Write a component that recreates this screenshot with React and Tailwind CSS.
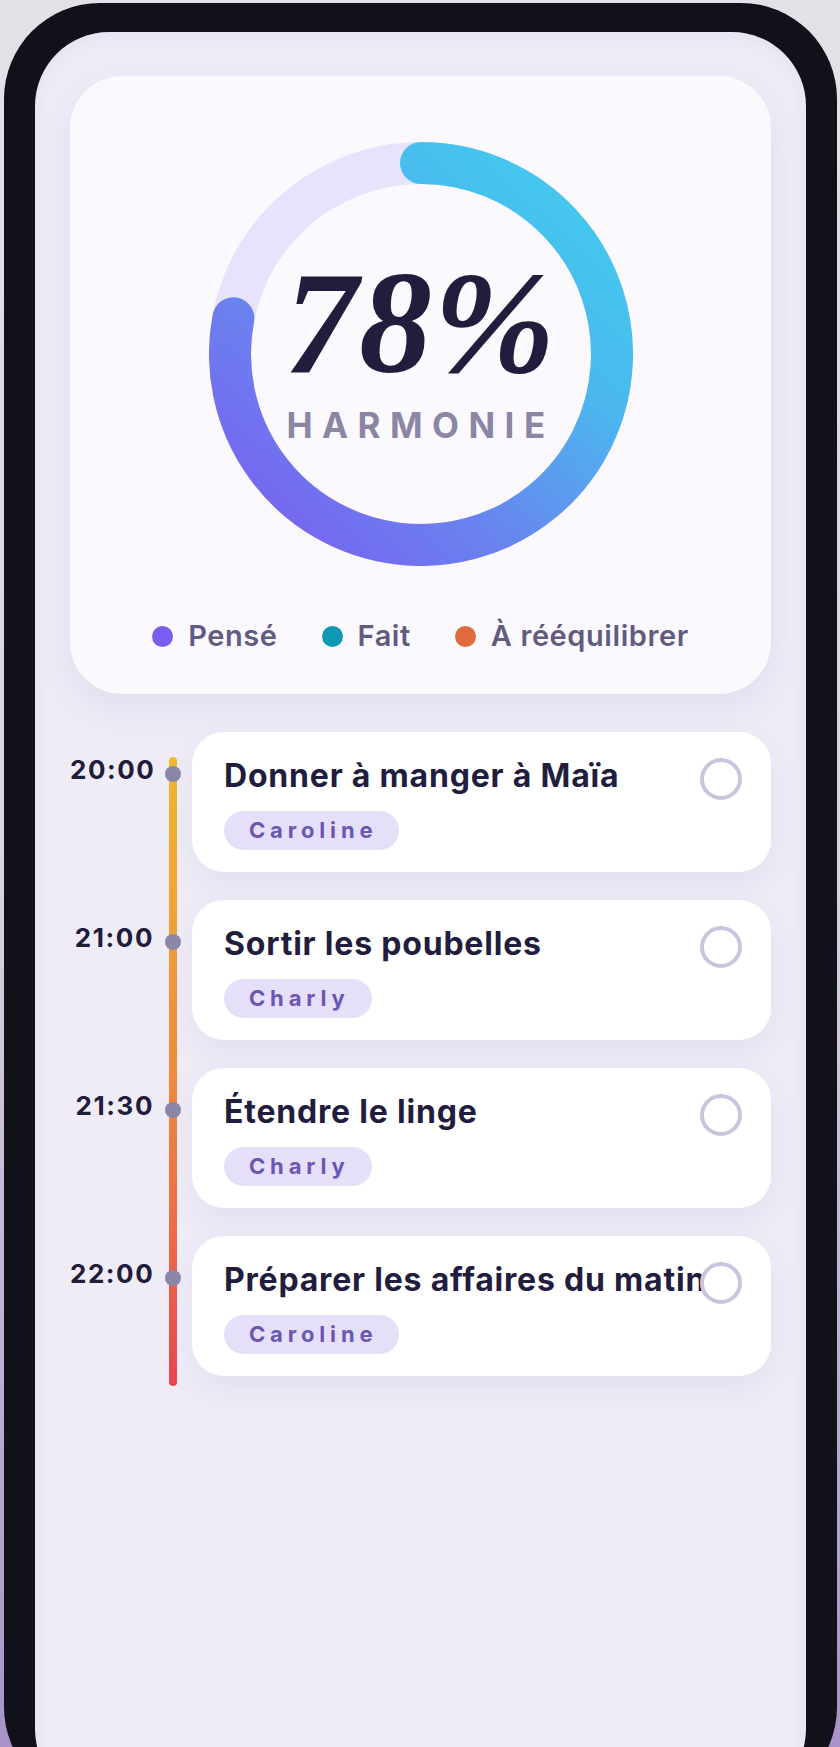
import React from 'react';

const tasks = [
  { time: '20:00', title: 'Donner à manger à Maïa', who: 'Caroline' },
  { time: '21:00', title: 'Sortir les poubelles', who: 'Charly' },
  { time: '21:30', title: 'Étendre le linge', who: 'Charly' },
  { time: '22:00', title: 'Préparer les affaires du matin', who: 'Caroline' },
];

const legend = [
  { label: 'Pensé', color: 'bg-[#7b5cf0]' },
  { label: 'Fait', color: 'bg-[#1199b4]' },
  { label: 'À rééquilibrer', color: 'bg-[#e06a3c]' },
];

// 78% arc, drawn clockwise from 12 o'clock
const arcPath = () => {
  const r = 191;
  const a = 0.78 * 2 * Math.PI;
  const x = 212 + r * Math.sin(a);
  const y = 212 - r * Math.cos(a);
  return `M 212 21 A ${r} ${r} 0 1 1 ${x.toFixed(2)} ${y.toFixed(2)}`;
};

const Donut = () => (
  <div className="relative w-[424px] h-[424px]">
    <svg width="424" height="424" viewBox="0 0 424 424">
      <defs>
        <linearGradient id="ring" x1="400" y1="40" x2="40" y2="424" gradientUnits="userSpaceOnUse">
          <stop offset="0" stopColor="#42ccee" />
          <stop offset="0.3" stopColor="#4ab9ee" />
          <stop offset="0.65" stopColor="#6a82ef" />
          <stop offset="1" stopColor="#7a5cf0" />
        </linearGradient>
      </defs>
      <circle cx="212" cy="212" r="191" fill="none" stroke="#e8e3fc" strokeWidth="42" />
      <path d={arcPath()} fill="none" stroke="url(#ring)" strokeWidth="42" strokeLinecap="round" />
    </svg>
    <div className="absolute inset-0 flex flex-col items-center pt-[108px]">
      <div className="text-[146px] leading-none font-bold italic tracking-[0.01em] text-[#221d3d] font-['Liberation_Serif',serif]">
        78%
      </div>
      <div className="mt-[12px] text-[35px] leading-none font-bold tracking-[0.27em] text-[#8b86a4]">
        HARMONIE
      </div>
    </div>
  </div>
);

const TaskRow = ({ task }) => (
  <div className="flex items-start">
    <div className="w-[84px] pt-[22px] text-right text-[26px] leading-[32px] font-bold tracking-[0.06em] text-[#201c3a]">
      {task.time}
    </div>
    <div className="w-[38px] shrink-0">
      <div className="ml-[11px] mt-[34px] w-[16px] h-[16px] rounded-full bg-[#8a86a6] relative z-10" />
    </div>
    <div className="relative flex-1 h-[140px] overflow-hidden rounded-[32px] bg-white pl-[32px] pt-[25px] shadow-[0_12px_32px_rgba(90,70,150,0.08)]">
      <div className="whitespace-nowrap text-[32px] leading-[38px] font-bold tracking-[0.025em] text-[#221d3d]">{task.title}</div>
      <div className="mt-[16px] inline-flex h-[39px] items-center rounded-full bg-[#e6dff8] pl-[25px] pr-[22px] text-[22px] font-bold tracking-[0.22em] text-[#6a57b2]">
        {task.who}
      </div>
      <div className="absolute right-[29px] top-[26px] w-[42px] h-[42px] rounded-full border-4 border-[#cac5de] bg-white" />
    </div>
  </div>
);

export default function App() {
  return (
    <div className="h-[1747px] overflow-hidden bg-gradient-to-b from-[#e4e1e8] via-[#d9d4e0] to-[#a892c8] pt-[3px] pl-[4px] pr-[3px] font-['Inter',sans-serif]">
      <div className="h-[1800px] rounded-[96px] bg-[#111219] px-[31px] pt-[29px]">
        <div className="h-full rounded-[74px] bg-[#efecf7] px-[35px] pt-[44px] shadow-[inset_0_6px_18px_rgba(60,40,110,0.05)]">
          {/* Harmony card */}
          <div className="flex flex-col items-center rounded-[52px] bg-[#fbf9fe] pt-[66px] pb-[40px] shadow-[0_14px_36px_rgba(90,70,150,0.09)]">
            <Donut />
            <div className="mt-[52px] flex h-[36px] items-center gap-[44px]">
              {legend.map(item => (
                <div key={item.label} className="flex items-center gap-[15px]">
                  <span className={`w-[21px] h-[21px] rounded-full ${item.color}`} />
                  <span className="text-[29px] font-semibold tracking-[0.02em] text-[#625b80]">{item.label}</span>
                </div>
              ))}
            </div>
          </div>

          {/* Timeline */}
          <div className="relative mt-[38px] flex flex-col gap-[28px]">
            <div className="absolute left-[99px] top-[25px] h-[629px] w-[8px] rounded-full bg-gradient-to-b from-[#f2b92a] via-[#ee8c3c] to-[#e8464f]" />
            {tasks.map(task => (
              <TaskRow key={task.time} task={task} />
            ))}
          </div>
        </div>
      </div>
    </div>
  );
}
